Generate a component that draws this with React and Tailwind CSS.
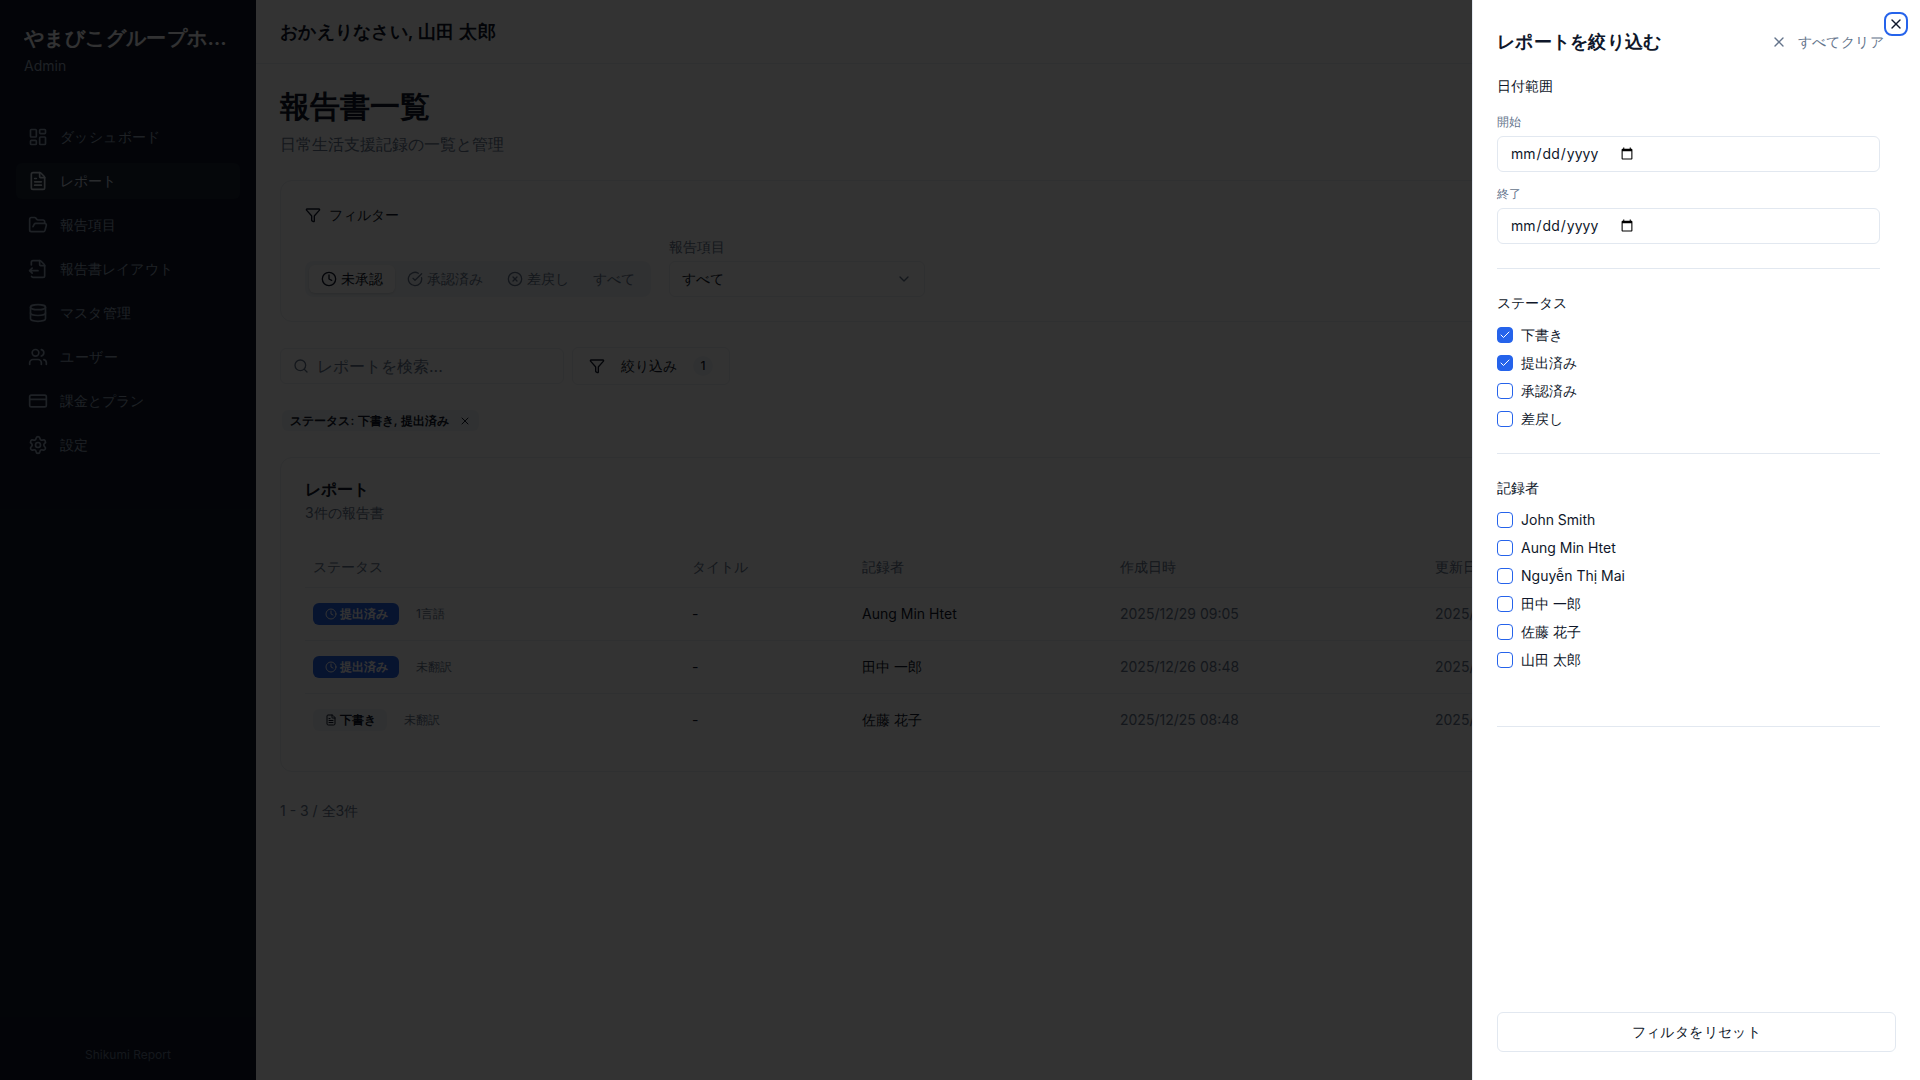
import React from "react";
import {
  LayoutDashboard, FileText, FolderOpen, FileOutput, Database, Users, CreditCard, Settings,
  Filter, Clock, CircleCheckBig, CircleX, ChevronDown, Search, X, Check,
} from "lucide-react";

const nav = [
  [LayoutDashboard, "ダッシュボード", false, "tracking-[0.4px]"],
  [FileText, "レポート", true, ""],
  [FolderOpen, "報告項目", false, ""],
  [FileOutput, "報告書レイアウト", false, "tracking-[0.1px]"],
  [Database, "マスタ管理", false, "tracking-[0.2px]"],
  [Users, "ユーザー", false, "tracking-[0.5px]"],
  [CreditCard, "課金とプラン", false, ""],
  [Settings, "設定", false, ""],
];

const rows = [
  { blue: true, status: "提出済み", tag: "1言語", who: "Aung Min Htet", created: "2025/12/29 09:05" },
  { blue: true, status: "提出済み", tag: "未翻訳", who: "田中 一郎", created: "2025/12/26 08:48" },
  { blue: false, status: "下書き", tag: "未翻訳", who: "佐藤 花子", created: "2025/12/25 08:48" },
];

function Box({ label, checked }) {
  return (
    <label className="flex items-center gap-2 h-5 text-sm text-[#0f172a]">
      <span className={"flex items-center justify-center size-4 rounded-[4px] border border-[#2563eb] " + (checked ? "bg-[#2563eb]" : "bg-white")}>
        {checked && <Check size={12} strokeWidth={2} className="text-white" />}
      </span>
      {label}
    </label>
  );
}

function Tab({ icon: Icon, label, active }) {
  return (
    <div className={"flex items-center gap-1 h-7 px-3 rounded-md text-sm " + (active ? "bg-white text-[#0f172a] shadow-sm" : "text-[#64748b]")}>
      {Icon && <Icon size={16} />}
      {label}
    </div>
  );
}

export default function App() {
  return (
    <div lang="ja" className="relative flex h-screen w-full overflow-hidden bg-white font-['Inter',sans-serif] text-[#0f172a]">
      <aside className="flex flex-col w-64 shrink-0 bg-[#0f172a]">
        <div className="px-6 pt-6">
          <div className="text-xl leading-7 font-semibold tracking-[0.4px] text-[#f8fafc] truncate">やまびこグループホーム札幌</div>
          <div className="mt-1 text-sm text-[#94a3b8]">Admin</div>
        </div>
        <nav className="flex flex-col gap-2 px-4 pt-[43px]">
          {nav.map(([Icon, label, active, track]) => (
            <div key={label} className={"flex items-center gap-3 h-9 px-3 rounded-md text-sm " + track + " " + (active ? "bg-[#1a2436] text-[#cbd5e1]" : "text-[#94a3b8]")}>
              <Icon size={20} strokeWidth={2} />
              {label}
            </div>
          ))}
        </nav>
        <div className="mt-auto pb-[17px] text-center text-xs text-[#64748b]">Shikumi Report</div>
      </aside>

      <main className="flex-1 min-w-0">
        <header className="flex items-center h-16 px-6 border-b border-[#e9edf2]">
          <div className="text-lg font-semibold tracking-[0.25px]">おかえりなさい, 山田 太郎</div>
        </header>
        <div className="p-6">
          <h1 className="text-3xl font-bold">報告書一覧</h1>
          <p className="mt-2 text-base text-[#64748b]">日常生活支援記録の一覧と管理</p>

          <section className="mt-6 p-6 h-[142px] rounded-xl border border-[#e9edf2] bg-white">
            <div className="flex items-center gap-2 h-5 text-sm">
              <Filter size={16} />
              フィルター
            </div>
            <div className="flex items-end gap-[18px] mt-3">
              <div className="flex items-center h-9 p-1 rounded-lg bg-[#f1f5f9]">
                <Tab icon={Clock} label="未承認" active />
                <Tab icon={CircleCheckBig} label="承認済み" />
                <Tab icon={CircleX} label="差戻し" />
                <Tab label="すべて" />
              </div>
              <div className="w-[256px]">
                <div className="text-sm text-[#64748b] mb-1">報告項目</div>
                <div className="flex items-center justify-between h-9 px-3 rounded-md border border-[#e9edf2] text-sm">
                  すべて
                  <ChevronDown size={16} className="text-[#64748b]" />
                </div>
              </div>
            </div>
          </section>

          <div className="flex items-center gap-2 mt-[25px]">
            <div className="flex items-center gap-2 w-[284px] h-9 px-3 rounded-md border border-[#e9edf2] text-base text-[#64748b]">
              <Search size={16} />
              レポートを検索...
            </div>
            <div className="flex items-center h-[38px] w-[158px] pl-4 rounded-md border border-[#e9edf2] text-sm font-medium">
              <Filter size={16} />
              <span className="ml-4">絞り込み</span>
              <span className="ml-4 flex items-center justify-center w-5 h-5 rounded-full bg-[#f1f5f9] text-xs">1</span>
            </div>
          </div>

          <div className="flex items-center gap-1 mt-[25px] ml-[2px] w-fit h-[21px] px-2 rounded-md bg-[#f1f5f9] text-xs font-semibold tracking-[0.1px]">
            ステータス: 下書き, 提出済み
            <X size={12} className="ml-1.5 font-normal" />
          </div>

          <section className="mt-[26px] h-[315px] pt-[19px] px-6 rounded-xl border border-[#e9edf2] bg-white">
            <div className="text-base font-semibold leading-6">レポート</div>
            <div className="mt-[2px] text-sm text-[#64748b]">3件の報告書</div>
            <table className="mt-6 w-[1566px] table-fixed text-sm">
              <colgroup>
                <col className="w-[379px]" />
                <col className="w-[170px]" />
                <col className="w-[258px]" />
                <col className="w-[315px]" />
                <col />
              </colgroup>
              <thead>
                <tr className="h-10 border-b border-[#e9edf2] text-left text-[#64748b]">
                  <th className="px-2 font-medium">ステータス</th>
                  <th className="px-2 font-medium">タイトル</th>
                  <th className="px-2 font-medium">記録者</th>
                  <th className="px-2 font-medium">作成日時</th>
                  <th className="px-2 font-medium">更新日時</th>
                </tr>
              </thead>
              <tbody>
                {rows.map((r, i) => (
                  <tr key={i} className={"h-[53px] " + (i < 2 ? "border-b border-[#e9edf2]" : "")}>
                    <td className="px-2">
                      <div className="flex items-center gap-[9px]">
                        <span className={"flex items-center gap-[3px] h-[22px] pl-3 pr-[11px] rounded-md text-xs font-semibold " + (r.blue ? "bg-[#2563eb] text-white" : "bg-[#f1f5f9] text-[#0f172a]")}>
                          {r.blue ? <Clock size={12} /> : <FileText size={12} />}
                          {r.status}
                        </span>
                        <span className="px-2 text-xs text-[#64748b]">{r.tag}</span>
                      </div>
                    </td>
                    <td className="px-2">-</td>
                    <td className="px-2">{r.who}</td>
                    <td className="px-2 text-[#64748b]">{r.created}</td>
                    <td className="px-2 text-[#64748b]">{r.created}</td>
                  </tr>
                ))}
              </tbody>
            </table>
          </section>

          <div className="mt-[29px] text-sm text-[#64748b]">1 - 3 / 全3件</div>
        </div>
      </main>

      <div className="absolute inset-0 bg-black/80" />

      <aside className="absolute inset-y-0 right-0 flex flex-col w-[448px] border-l border-[#e2e8f0] bg-white pt-7 px-6 pb-7">
        <div className="absolute top-3 right-3 flex items-center justify-center size-6 rounded-lg border-2 border-[#2563eb]">
          <X size={16} />
        </div>
        <div className="flex items-center justify-between h-7">
          <div className="text-lg font-semibold tracking-[0.3px]">レポートを絞り込む</div>
          <div className="flex items-center pr-3 text-sm tracking-[0.4px] text-[#64748b]">
            <X size={16} className="mr-[11px]" />
            すべてクリア
          </div>
        </div>

        <div className="pr-4">
          <div className="mt-5 text-sm font-medium">日付範囲</div>
          <div className="mt-[18px] text-xs text-[#64748b]">開始</div>
          <input type="date" className="mt-1.5 block w-full h-9 px-3 rounded-md border border-[#e2e8f0] bg-white text-sm [&::-webkit-datetime-edit]:flex-none" />
          <div className="mt-3.5 text-xs text-[#64748b]">終了</div>
          <input type="date" className="mt-1.5 block w-full h-9 px-3 rounded-md border border-[#e2e8f0] bg-white text-sm [&::-webkit-datetime-edit]:flex-none" />
          <div className="mt-6 h-px bg-[#e2e8f0]" />

          <div className="mt-6 text-sm font-medium">ステータス</div>
          <div className="flex flex-col gap-2 mt-3">
            <Box label="下書き" checked />
            <Box label="提出済み" checked />
            <Box label="承認済み" />
            <Box label="差戻し" />
          </div>
          <div className="mt-6 h-px bg-[#e2e8f0]" />

          <div className="mt-6 text-sm font-medium">記録者</div>
          <div className="flex flex-col gap-2 mt-3">
            <Box label="John Smith" />
            <Box label="Aung Min Htet" />
            <Box label="Nguyễn Thị Mai" />
            <Box label="田中 一郎" />
            <Box label="佐藤 花子" />
            <Box label="山田 太郎" />
          </div>
          <div className="mt-14 h-px bg-[#e2e8f0]" />
        </div>

        <div className="mt-auto flex items-center justify-center h-10 rounded-md border border-[#e2e8f0] text-sm font-medium tracking-[0.4px]">
          フィルタをリセット
        </div>
      </aside>
    </div>
  );
}
